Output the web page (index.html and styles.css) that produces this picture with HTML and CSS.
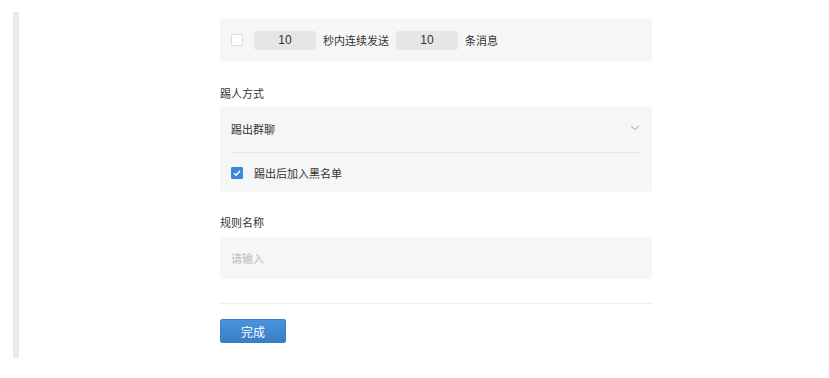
FILE: index.html
```html
<!DOCTYPE html>
<html lang="zh-CN">
<head>
  <meta charset="UTF-8" />
  <meta name="viewport" content="width=device-width, initial-scale=1.0"/>
  <title>踢人规则</title>
  <link rel="stylesheet" href="styles.css">
</head>
<body>

<div class="rail"></div>

<div class="form">
  <div class="panel rate-row">
    <span class="check"></span>
    <input class="num-input" type="text" value="10">
    <span class="text">秒内连续发送</span>
    <input class="num-input" type="text" value="10">
    <span class="text">条消息</span>
  </div>

  <div class="field-label first">踢人方式</div>
  <div class="panel">
    <div class="select-row">
      <span class="text">踢出群聊</span>
      <svg class="chevron" width="10" height="6" viewBox="0 0 10 6">
        <path d="M1 1 L5 4.5 L9 1" fill="none" stroke="#bdbdbd" stroke-width="1.2"/>
      </svg>
    </div>
    <div class="divider"></div>
    <div class="check-row">
      <span class="check checked">
        <svg width="12" height="12" viewBox="0 0 12 12">
          <path d="M3 6.2 L5.1 8.2 L9 4" fill="none" stroke="#fff" stroke-width="1.5"/>
        </svg>
      </span>
      <span class="text">踢出后加入黑名单</span>
    </div>
  </div>

  <div class="field-label">规则名称</div>
  <div class="panel name-row">
    <input class="name-input" type="text" placeholder="请输入">
  </div>

  <div class="footer-line"></div>
  <button class="btn-done">完成</button>
</div>

</body>
</html>
```

FILE: styles.css
```css
body {
  margin: 0;
  padding: 12px 0 0 13px;
  background: #fff;
  display: flex;
  align-items: flex-start;
  color: #333;
  font-family: "Noto Sans CJK SC", "Liberation Sans", sans-serif;
  font-size: 11px;
}

.rail {
  width: 6px;
  height: 346px;
  background: #ebebeb;
}

.form {
  width: 432px;
  margin-left: 201px;
  padding-top: 6px;
  display: flex;
  flex-direction: column;
}

.panel {
  background: #f6f6f6;
  border-radius: 2px;
}

.rate-row {
  height: 44px;
  padding: 0 11px;
  display: flex;
  align-items: center;
}

.text {
  line-height: 14px;
  white-space: nowrap;
}

.check {
  width: 12px;
  height: 12px;
  box-sizing: border-box;
  background: #fff;
  border: 1px solid #dcdcdc;
  border-radius: 1px;
  flex-shrink: 0;
  display: flex;
}

.check.checked {
  background: #3d87d8;
  border-color: #3d87d8;
}

.check.checked svg {
  margin: -1px;
}

.num-input {
  width: 62px;
  height: 19px;
  box-sizing: border-box;
  border: none;
  border-radius: 3px;
  background: #e6e6e6;
  color: #333;
  text-align: center;
  font-family: "Liberation Sans", Arial, sans-serif;
  font-size: 12px;
  padding: 0;
  outline: none;
}

.rate-row .check {
  margin-right: 11px;
}

.rate-row .text {
  margin: 0 7px;
}

.field-label {
  margin-top: 23px;
  margin-bottom: 8px;
  line-height: 14px;
}

.field-label.first {
  margin-top: 24px;
  margin-bottom: 6px;
}

.select-row {
  height: 46px;
  padding: 0 12px 0 11px;
  display: flex;
  align-items: center;
  justify-content: space-between;
}

.chevron {
  margin-top: -3px;
}

.divider {
  height: 1px;
  margin: 0 12px 0 11px;
  background: #e6e6e6;
}

.check-row {
  height: 39px;
  padding: 0 11px;
  display: flex;
  align-items: center;
  gap: 11px;
}

.name-row {
  height: 42px;
  display: flex;
}

.name-input {
  flex: 1;
  border: none;
  background: transparent;
  padding: 0 11px;
  font-family: "Noto Sans CJK SC", "Liberation Sans", sans-serif;
  font-size: 11px;
  color: #333;
  outline: none;
}

.name-input::placeholder {
  color: #bbb;
}

.footer-line {
  height: 1px;
  margin-top: 24px;
  background: #eeeeee;
}

.btn-done {
  margin-top: 15px;
  width: 66px;
  height: 24px;
  padding: 0;
  border: 1px solid #3a80c9;
  border-radius: 2px;
  background: linear-gradient(#4a93dc, #3a7fc6);
  color: #fff;
  font-family: "Noto Sans CJK SC", "Liberation Sans", sans-serif;
  font-size: 12px;
  cursor: pointer;
}
```
